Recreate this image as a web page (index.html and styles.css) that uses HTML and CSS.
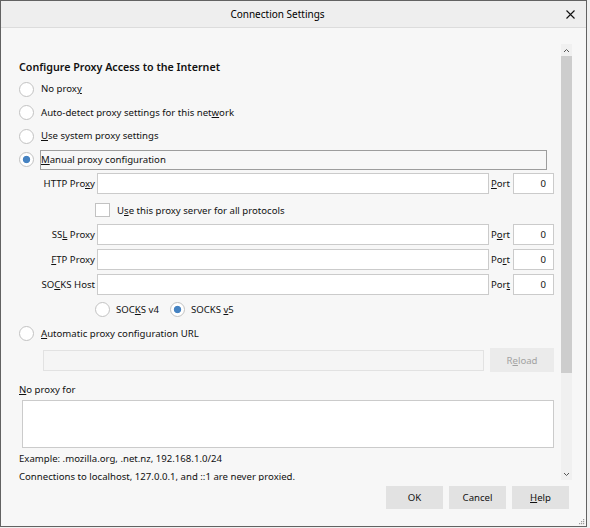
FILE: index.html
```html
<!DOCTYPE html>
<html lang="en">
<head>
<meta charset="utf-8">
<title>Connection Settings</title>
<link rel="stylesheet" href="styles.css">
</head>
<body>
<div class="window">
  <div class="titlebar">
    <div class="title">Connection Settings</div>
    <div class="close">
      <svg width="9" height="9" viewBox="0 0 9 9"><path d="M0.5 0.5L8.5 8.5M8.5 0.5L0.5 8.5" stroke="#111" stroke-width="1.1" fill="none"/></svg>
    </div>
  </div>
  <div class="pane">
    <div class="content">
      <div class="heading">Configure Proxy Access to the Internet</div>
      <label class="opt h24"><input type="radio" name="mode" class="radio"><span class="lbl">No prox<u>y</u></span></label>
      <label class="opt h23"><input type="radio" name="mode" class="radio"><span class="lbl">Auto-detect proxy settings for this net<u>w</u>ork</span></label>
      <label class="opt h24"><input type="radio" name="mode" class="radio"><span class="lbl"><u>U</u>se system proxy settings</span></label>
      <label class="opt h23"><input type="radio" name="mode" class="radio" checked><span class="lbl focus"><u>M</u>anual proxy configuration</span></label>

      <div class="prow first">
        <span class="plabel">HTTP Pro<u>x</u>y</span>
        <input type="text" class="field">
        <span class="port"><u>P</u>ort</span>
        <input type="text" class="field num" value="0">
      </div>
      <label class="cbrow"><input type="checkbox" class="check"><span>U<u>s</u>e this proxy server for all protocols</span></label>
      <div class="prow">
        <span class="plabel">SS<u>L</u> Proxy</span>
        <input type="text" class="field">
        <span class="port">P<u>o</u>rt</span>
        <input type="text" class="field num" value="0">
      </div>
      <div class="prow gap">
        <span class="plabel"><u>F</u>TP Proxy</span>
        <input type="text" class="field">
        <span class="port">Po<u>r</u>t</span>
        <input type="text" class="field num" value="0">
      </div>
      <div class="prow gap">
        <span class="plabel">SO<u>C</u>KS Host</span>
        <input type="text" class="field">
        <span class="port">Por<u>t</u></span>
        <input type="text" class="field num" value="0">
      </div>
      <div class="socksrow">
        <label class="sopt"><input type="radio" name="socks" class="radio"><span>SOC<u>K</u>S v4</span></label>
        <label class="sopt"><input type="radio" name="socks" class="radio" checked><span>SOCKS <u>v</u>5</span></label>
      </div>
      <label class="opt h21"><input type="radio" name="mode" class="radio"><span class="lbl"><u>A</u>utomatic proxy configuration URL</span></label>
      <div class="urlrow">
        <input type="text" class="field disabled" disabled>
        <button class="reload" disabled>R<u>e</u>load</button>
      </div>
      <div class="nplabel"><u>N</u>o proxy for</div>
      <textarea class="noproxy"></textarea>
      <div class="note first-note">Example: .mozilla.org, .net.nz, 192.168.1.0/24</div>
      <div class="note">Connections to localhost, 127.0.0.1, and ::1 are never proxied.</div>
    </div>
    <div class="scrollbar">
      <div class="sb-btn">
        <svg width="7" height="5" viewBox="0 0 7 5"><path d="M1 4L3.5 1.5L6 4" stroke="#555" stroke-width="1" fill="none"/></svg>
      </div>
      <div class="sb-track"><div class="sb-thumb"></div></div>
      <div class="sb-btn">
        <svg width="7" height="5" viewBox="0 0 7 5"><path d="M1 1L3.5 3.5L6 1" stroke="#555" stroke-width="1" fill="none"/></svg>
      </div>
    </div>
  </div>
  <div class="footer">
    <button class="btn">OK</button>
    <button class="btn">Cancel</button>
    <button class="btn"><u>H</u>elp</button>
  </div>
  <svg class="grip" width="6" height="6" viewBox="0 0 6 6">
    <rect x="4" y="0" width="1.2" height="1.2" fill="#9a9a9a"/>
    <rect x="2" y="2" width="1.2" height="1.2" fill="#9a9a9a"/>
    <rect x="4" y="2" width="1.2" height="1.2" fill="#9a9a9a"/>
    <rect x="0" y="4" width="1.2" height="1.2" fill="#9a9a9a"/>
    <rect x="2" y="4" width="1.2" height="1.2" fill="#9a9a9a"/>
    <rect x="4" y="4" width="1.2" height="1.2" fill="#9a9a9a"/>
  </svg>
</div>
</body>
</html>
```

FILE: styles.css
```css
* { box-sizing: border-box; }

html, body {
  margin: 0;
  padding: 0;
  background: #f0f0f0;
}

body {
  font-family: "Noto Sans", "Open Sans", sans-serif;
  font-size: 9.6px;
  color: #111;
}

u {
  text-decoration: underline;
  text-underline-offset: 1px;
  text-decoration-thickness: 1px;
}

.window {
  position: relative;
  width: 587px;
  height: 527px;
  border: 1px solid #626262;
  background: #f7f7f7;
  display: flex;
  flex-direction: column;
}

.titlebar {
  height: 27px;
  flex: none;
  display: flex;
  align-items: center;
  background: #eeeeee;
  border-bottom: 1px solid #dcdcdc;
}

.title {
  flex: 1;
  text-align: center;
  font-size: 10px;
  color: #000;
  line-height: 26px;
}

.close {
  width: 32px;
  height: 26px;
  display: flex;
  align-items: center;
  justify-content: center;
}

.pane {
  flex: 1;
  display: flex;
  min-height: 0;
  padding-right: 14px;
}

.content {
  flex: 1;
  min-width: 0;
  overflow: hidden;
  padding: 30px 7px 0 18px;
}

.heading {
  font-size: 10.7px;
  font-weight: 600;
  line-height: 19px;
  height: 19px;
  color: #111;
}

.opt {
  display: flex;
  align-items: center;
}

.h24 { height: 24px; }
.h23 { height: 23px; }
.h21 { height: 21px; }

.radio {
  appearance: none;
  -webkit-appearance: none;
  margin: 0 6px 0 0;
  width: 15px;
  height: 15px;
  flex: none;
  border: 1px solid #c2c2c2;
  border-radius: 50%;
  background: #fff;
}

.radio:checked {
  background: radial-gradient(circle, #4683c2 0, #4683c2 3.3px, #ffffff 4.1px);
}

.lbl {
  border: 1px solid transparent;
  line-height: 18px;
}

.lbl.focus {
  flex: 1;
  border-color: #9d9d9d;
  margin-right: 7px;
}

.prow {
  display: grid;
  grid-template-columns: 76px 1fr 20px 41px;
  column-gap: 2px;
  align-items: center;
  height: 21px;
}

.prow.first { margin-top: 2px; }
.prow.gap { margin-top: 4px; }

.plabel {
  text-align: right;
  white-space: nowrap;
}

.port {
  white-space: nowrap;
}

.field {
  appearance: none;
  -webkit-appearance: none;
  height: 21px;
  width: 100%;
  margin: 0;
  border: 1px solid #cbcbcb;
  background: #fff;
  padding: 0 7px;
  font-family: inherit;
  font-size: 9.6px;
  color: #111;
  outline: none;
}

.field.num { text-align: right; }

.cbrow {
  display: flex;
  align-items: center;
  height: 30px;
  padding: 2px 0 0 76px;
}

.check {
  appearance: none;
  -webkit-appearance: none;
  margin: 0 7px 0 0;
  width: 15px;
  height: 14px;
  border: 1px solid #c2c2c2;
  background: #fff;
}

.socksrow {
  margin-top: 1px;
  height: 27px;
  display: flex;
  align-items: center;
  padding-left: 76px;
  gap: 11px;
}

.sopt {
  display: flex;
  align-items: center;
}

.urlrow {
  margin-top: 4px;
  height: 24px;
  display: flex;
  align-items: center;
  padding-left: 24px;
  gap: 6px;
}

.field.disabled {
  flex: 1;
  background: #f5f5f5;
  border-color: #e2e2e2;
}

.reload {
  width: 64px;
  height: 24px;
  flex: none;
  border: none;
  background: #ebebeb;
  color: #a2a2a2;
  font-family: inherit;
  font-size: 9.6px;
  padding: 0;
}

.nplabel {
  margin-top: 9px;
  line-height: 18px;
}

.noproxy {
  display: block;
  margin: 1px 0 0 3px;
  width: 532px;
  height: 48px;
  border: 1px solid #cbcbcb;
  background: #fff;
  resize: none;
  outline: none;
}

.note {
  line-height: 18px;
  white-space: nowrap;
}

.first-note { margin-top: 2px; }

.scrollbar {
  width: 11px;
  flex: none;
  margin: 16px 0 1px 0;
  background: #f0f0f0;
  display: flex;
  flex-direction: column;
}

.sb-btn {
  height: 12px;
  flex: none;
  display: flex;
  align-items: center;
  justify-content: center;
}

.sb-track {
  flex: 1;
}

.sb-thumb {
  height: 317px;
  background: #cdcdcd;
}

.footer {
  height: 45px;
  flex: none;
  display: flex;
  justify-content: flex-end;
  align-items: flex-start;
  gap: 6px;
  padding: 5px 17px 0 0;
}

.btn {
  width: 57px;
  height: 23px;
  border: none;
  background: #e2e2e2;
  color: #111;
  font-family: inherit;
  font-size: 9.6px;
  padding: 0;
}

.grip {
  position: absolute;
  right: 1px;
  bottom: 1px;
}
```
